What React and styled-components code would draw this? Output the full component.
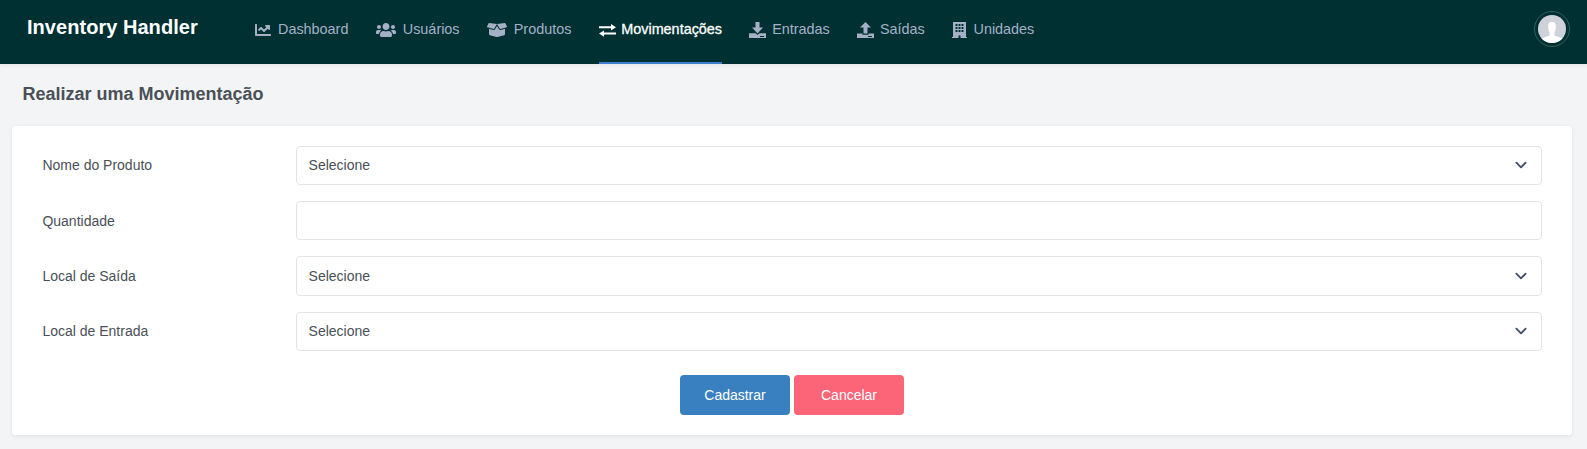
import React from 'react';
import styled, { createGlobalStyle } from 'styled-components';
import { FaChartLine, FaUsers, FaBoxOpen } from 'react-icons/fa';

const GlobalStyle = createGlobalStyle`
  *, *::before, *::after { box-sizing: border-box; }
  body {
    margin: 0;
    min-height: 100vh;
    background: #f3f4f6;
    color: #495057;
    font: 14px/21px Arial, "Liberation Sans", sans-serif;
  }
`;

const Header = styled.header`
  position: relative;
  display: flex;
  align-items: stretch;
  height: 64px;
  padding: 0 17px 0 27px;
  background: #003032;
  box-shadow: 0 2px 3px rgba(4, 9, 20, 0.05);
`;

const Brand = styled.h1`
  width: 228px;
  margin: 0;
  padding-top: 12px;
  color: #fff;
  font-size: 20px;
  line-height: 30px;
  font-weight: 700;
  letter-spacing: 0.04px;
`;

const Nav = styled.nav`
  display: flex;
  gap: 27.2px;
  flex: 1;
`;

const NavItem = styled.a`
  display: flex;
  align-items: center;
  height: 64px;
  padding-bottom: 4px;
  color: ${({ $active }) => ($active ? '#fff' : '#a5b0c7')};
  box-shadow: ${({ $active }) => ($active ? 'inset 0 -2px #3b7fcb' : 'none')};
  -webkit-text-stroke: ${({ $active }) => ($active ? '0.3px' : '0')};
  font-size: 14.4px;
  line-height: 22px;
  text-decoration: none;
  white-space: nowrap;
`;

const NavIcon = styled.span`
  display: flex;
  align-items: center;
  flex: none;
  width: ${({ $slot }) => $slot}px;
  svg { display: block; overflow: visible; }
`;

const NavLabel = styled.span`
  padding-bottom: 2px;
`;

const Account = styled.button`
  display: flex;
  align-self: flex-start;
  width: 36px;
  height: 36px;
  margin-top: 11px;
  padding: 3px;
  border: 1px solid #365f60;
  border-radius: 50%;
  background: none;
`;

const Title = styled.h2`
  margin: 0;
  padding: 16px 22.5px 18px;
  font-size: 18px;
  line-height: 28px;
  font-weight: 700;
  color: #495057;
`;

const Card = styled.form`
  height: 309px;
  margin: 0 15px 0 12px;
  padding: 20px 30px;
  border-radius: 4px;
  background: #fff;
  box-shadow: 0 1px 4px rgba(4, 9, 20, 0.08);
`;

const Row = styled.label`
  display: grid;
  grid-template-columns: 254px 1fr;
  align-items: center;
  margin-bottom: 16px;
`;

const Field = styled.span`
  display: flex;
  align-items: center;
  justify-content: space-between;
  height: 39.2px;
  padding: 0.6px 14px 0 11.6px;
  border: 1px solid #e2e5e8;
  border-radius: 4px;
  svg { margin-bottom: 1.4px; }
`;

const LabelText = styled.span`
  padding: 0.6px 0 0 0.4px;
`;

const Actions = styled.div`
  display: flex;
  justify-content: center;
  gap: 4px;
  padding: 8px 1px 0 0;
`;

const Button = styled.button`
  width: 110px;
  height: 40px;
  padding: 1px 0 0 1px;
  border: 0;
  border-radius: 4px;
  background: ${({ $tone }) => ($tone === 'danger' ? '#fb6577' : '#3980c0')};
  color: #fff;
  font: 14px/21px Arial, "Liberation Sans", sans-serif;
`;

const ExchangeIcon = () => (
  <svg width="17" height="13" viewBox="0 0 17 13" fill="currentColor">
    <path d="M0 2.200h12V0l5 3.200-5 3.200V4.200H0zM17 8.600H5V6.400L0 9.600l5 3.200v-2.200h12z" />
  </svg>
);

const TransferIcon = ({ up }) => (
  <svg width="17" height="16" viewBox="0 0 17 16" fill="currentColor">
    <path d={up ? 'M8.500 0 14 5.500h-3.500V11.500h-4V5.500H3z' : 'M6.500 0h4v5.500H14l-5.500 6L3 5.500h3.500z'} />
    <path
      fillRule="evenodd"
      d={up
        ? 'M0 11.500h5.500v1.200h6v-1.200H17V16H0zM11 14v.9h4V14z'
        : 'M0 11.200h6.500l2 1.800 2-1.800H17V16H0zM11 14v.9h4V14z'}
    />
  </svg>
);

const BuildingIcon = () => (
  <svg width="15" height="16" viewBox="0 0 15 16" fill="currentColor">
    <path
      fillRule="evenodd"
      d="M1 0h13v15h1v1H8.500v-2.500h-2V16H0v-1h1zM3.500 2v2h2V2zM6.500 2v2h2V2zM9.500 2v2h2V2zM3.500 5v2h2V5zM6.500 5v2h2V5zM9.500 5v2h2V5zM3.500 8v2h2V8zM6.500 8v2h2V8zM9.500 8v2h2V8z"
    />
  </svg>
);

const Chevron = () => (
  <svg width="12" height="8" viewBox="0 0 12 8" fill="none" stroke="#444f69" strokeWidth="1.9" strokeLinecap="round" strokeLinejoin="round">
    <path d="m1.400 1.700 4.600 4.600 4.600-4.600" />
  </svg>
);

const Avatar = () => (
  <svg width="28" height="28" viewBox="0 0 28 28">
    <defs>
      <clipPath id="avatar"><circle cx="14" cy="14" r="14" /></clipPath>
    </defs>
    <g clipPath="url(#avatar)">
      <path fill="#cfd2db" d="M0 0h28v28H0z" />
      <path fill="#fff" d="M14 6.800c2.600 0 4 1.800 3.800 5.100-.1 2.600-.7 4-1.300 5.200v3c0 1.300 3 1.500 5.500 2.300l3.500 1.600V29H2.500v-5l3.500-1.600c2.500-.8 5.500-1 5.500-2.300v-3c-.6-1.200-1.200-2.600-1.300-5.200-.2-3.300 1.200-5.100 3.800-5.100z" />
    </g>
  </svg>
);

const links = [
  { label: 'Dashboard', icon: <FaChartLine size={16} />, slot: 23 },
  { label: 'Usuários', icon: <FaUsers size={20} />, slot: 27.2 },
  { label: 'Produtos', icon: <FaBoxOpen size={20} />, slot: 27 },
  { label: 'Movimentações', icon: <ExchangeIcon />, slot: 22.7, active: true },
  { label: 'Entradas', icon: <TransferIcon />, slot: 23 },
  { label: 'Saídas', icon: <TransferIcon up />, slot: 23 },
  { label: 'Unidades', icon: <BuildingIcon />, slot: 21.5 },
];

const fields = [
  { label: 'Nome do Produto', value: 'Selecione' },
  { label: 'Quantidade' },
  { label: 'Local de Saída', value: 'Selecione' },
  { label: 'Local de Entrada', value: 'Selecione' },
];

export default function App() {
  return (
    <>
      <GlobalStyle />
      <Header>
        <Brand>Inventory Handler</Brand>
        <Nav>
          {links.map(({ label, icon, slot, active }) => (
            <NavItem key={label} $active={active}>
              <NavIcon $slot={slot}>{icon}</NavIcon>
              <NavLabel>{label}</NavLabel>
            </NavItem>
          ))}
        </Nav>
        <Account type="button" aria-label="Conta"><Avatar /></Account>
      </Header>
      <main>
        <Title>Realizar uma Movimentação</Title>
        <Card>
          {fields.map(({ label, value }) => (
            <Row key={label}>
              <LabelText>{label}</LabelText>
              <Field>
                {value}
                {value && <Chevron />}
              </Field>
            </Row>
          ))}
          <Actions>
            <Button type="button">Cadastrar</Button>
            <Button type="button" $tone="danger">Cancelar</Button>
          </Actions>
        </Card>
      </main>
    </>
  );
}
